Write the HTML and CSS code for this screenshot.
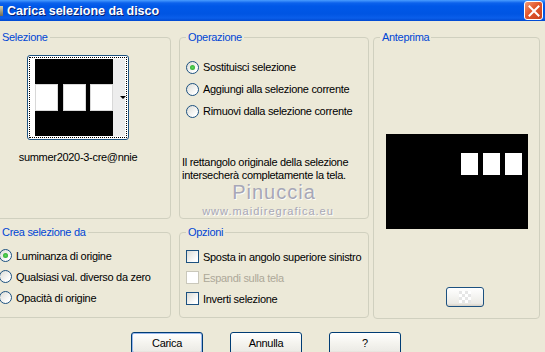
FILE: index.html
```html
<!DOCTYPE html>
<html lang="it">
<head>
  <meta charset="UTF-8">
  <title>Carica selezione da disco</title>
  <link rel="stylesheet" href="styles.css">
</head>
<body>
  <div class="titlebar">
    <span class="app-icon"></span>
    <span class="title">Carica selezione da disco</span>
    <span class="close">
      <svg width="12" height="12" viewBox="0 0 12 12"><path d="M1.5 1.5 L10.5 10.5 M10.5 1.5 L1.5 10.5" stroke="#fff" stroke-width="2" stroke-linecap="square"/></svg>
    </span>
  </div>

  <div class="main">
    <div class="groups">
      <div class="group sel">
        <div class="legend">Selezione</div>
        <div class="thumb">
          <div class="thumb-inner">
            <div class="thumb-img">
              <div class="thumb-row">
                <span class="tsq"></span><span class="tsq"></span><span class="tsq"></span>
              </div>
            </div>
            <div class="thumb-strip"><span class="arrow"></span></div>
          </div>
        </div>
        <div class="caption">summer2020-3-cre@nnie</div>
      </div>

      <div class="group op">
        <div class="legend">Operazione</div>
        <label class="opt"><span class="radio on"></span>Sostituisci selezione</label>
        <label class="opt"><span class="radio"></span>Aggiungi alla selezione corrente</label>
        <label class="opt"><span class="radio"></span>Rimuovi dalla selezione corrente</label>
        <p class="info">Il rettangolo originale della selezione<br>intersecherà completamente la tela.</p>
        <div class="mark">
          <div class="mark-name">Pinuccia</div>
          <div class="mark-url">www.maidiregrafica.eu</div>
        </div>
      </div>

      <div class="group crea">
        <div class="legend">Crea selezione da</div>
        <label class="opt"><span class="radio on"></span>Luminanza di origine</label>
        <label class="opt"><span class="radio"></span>Qualsiasi val. diverso da zero</label>
        <label class="opt"><span class="radio"></span>Opacità di origine</label>
      </div>

      <div class="group opz">
        <div class="legend">Opzioni</div>
        <label class="opt"><span class="check"></span>Sposta in angolo superiore sinistro</label>
        <label class="opt disabled"><span class="check"></span>Espandi sulla tela</label>
        <label class="opt"><span class="check"></span>Inverti selezione</label>
      </div>
    </div>

    <div class="group preview">
      <div class="legend">Anteprima</div>
      <div class="canvas">
        <span class="psq"></span><span class="psq"></span><span class="psq"></span>
      </div>
      <button class="mini"><span class="checker"></span></button>
    </div>
  </div>

  <div class="buttons">
    <button class="btn default">Carica</button>
    <button class="btn">Annulla</button>
    <button class="btn">?</button>
  </div>
</body>
</html>
```

FILE: styles.css
```css
body {
  margin: 0;
  width: 545px;
  height: 352px;
  overflow: hidden;
  background: #ece9d8;
  font-family: "Liberation Sans", Arial, sans-serif;
  font-size: 11px;
  letter-spacing: -0.3px;
  color: #000;
}

/* title bar */
.titlebar {
  height: 21px;
  display: flex;
  align-items: center;
  background: linear-gradient(#4a9dff 0, #0c62ec 3px, #0058e8 6px, #0055e3 14px, #0a5eea 18px, #0048d0 21px);
}
.app-icon {
  width: 4px;
  height: 10px;
  margin-left: -1px;
  background: linear-gradient(#d9d0a8, #6f6a55);
}
.title {
  margin-left: 4px;
  color: #fff;
  font-family: "Liberation Sans", Arial, sans-serif;
  font-weight: bold;
  font-size: 12.5px;
  letter-spacing: 0;
  text-shadow: 1px 1px 0 #0a1e6e;
}
.close {
  margin-left: auto;
  margin-right: 2px;
  width: 17px;
  height: 17px;
  border: 1px solid #fff;
  border-radius: 3px;
  background: linear-gradient(135deg, #f29a75, #e2562b 45%, #c8401c);
  display: flex;
  align-items: center;
  justify-content: center;
}

/* layout */
.main {
  display: flex;
  margin-left: -7px;
  margin-top: 16px;
}
.groups {
  display: grid;
  grid-template-columns: 178px 190px;
  grid-template-rows: 182px 86px;
  column-gap: 8px;
  row-gap: 13px;
}
.group {
  position: relative;
  box-sizing: border-box;
  border: 1px solid #d0d0bf;
  border-radius: 4px;
}
.legend {
  position: absolute;
  top: -7px;
  left: 6px;
  padding: 0 2px;
  background: #ece9d8;
  color: #0046d5;
  line-height: 13px;
}

/* selezione */
.sel {
  padding: 17px 0 0 33px;
}
.thumb {
  box-sizing: border-box;
  width: 102px;
  height: 85px;
  border: 1px solid #1c5180;
  border-radius: 3px;
  background: #fff;
  padding: 1px;
}
.thumb-inner {
  height: 100%;
  box-sizing: border-box;
  border: 1px dotted #000;
  display: flex;
  padding: 1px 1px 1px 5px;
}
.thumb-img {
  width: 78px;
  background: #000;
  display: flex;
  align-items: center;
}
.thumb-row {
  width: 100%;
  display: flex;
  justify-content: space-between;
  background: #000;
}
.tsq {
  width: 23px;
  height: 27px;
  background: #fff;
  box-shadow: inset 0 0 0 1px #d8d8d8;
}
.thumb-strip {
  flex: 1;
  background: #ededed;
  position: relative;
}
.arrow {
  position: absolute;
  right: -1px;
  top: 37px;
  border-left: 3px solid transparent;
  border-right: 3px solid transparent;
  border-top: 3px solid #000;
}
.caption {
  width: 102px;
  margin-top: 11px;
  display: flex;
  justify-content: center;
  white-space: nowrap;
}

/* options */
.opt {
  display: flex;
  align-items: center;
  height: 22px;
  white-space: nowrap;
}
.radio, .check {
  box-sizing: border-box;
  width: 13px;
  height: 13px;
  margin-right: 4px;
  border: 1px solid #1c5180;
  background: linear-gradient(135deg, #dcdcd6, #fff 80%);
  position: relative;
  flex: none;
}
.radio {
  border-radius: 50%;
}
.radio.on::after {
  content: "";
  position: absolute;
  left: 3px;
  top: 3px;
  width: 5px;
  height: 5px;
  border-radius: 50%;
  background: radial-gradient(#5ed85e, #21a121);
}
.disabled {
  color: #aca899;
}
.disabled .check {
  border-color: #cac8bb;
  background: #fff;
}

.op {
  padding: 18px 0 0 6px;
}
.info {
  margin: 34px 0 0 -4px;
  line-height: 13px;
}
.mark {
  text-align: center;
  margin-left: -6px;
  color: #a7a7b7;
  text-shadow: 1px 1px 0 #fdfdf8;
}
.mark-name {
  font-size: 20px;
  line-height: 20px;
  letter-spacing: 1px;
}
.mark-url {
  font-size: 11px;
  letter-spacing: 1px;
  margin-top: 3px;
  margin-left: -12px;
}

.crea {
  padding: 12px 0 0 5px;
}
.opz {
  padding: 13px 0 0 6px;
}
.opz .opt,
.crea .opt {
  height: 21px;
}

/* anteprima */
.preview {
  margin-left: 4px;
  width: 167px;
  height: 282px;
  padding: 96px 0 0 12px;
}
.canvas {
  width: 142px;
  height: 95px;
  background: #000;
  display: flex;
  gap: 5px;
  justify-content: flex-end;
  padding: 19px 6px 0 0;
  box-sizing: border-box;
}
.psq {
  width: 17px;
  height: 22px;
  background: #fff;
}
.mini {
  display: block;
  margin: 58px 0 0 60px;
  width: 38px;
  height: 20px;
  border: 1px solid #1c5180;
  border-radius: 3px;
  background: linear-gradient(#fff, #ecebe6 85%, #d6d0c5);
  padding: 0;
}
.checker {
  display: block;
  margin: 0 auto;
  width: 12px;
  height: 12px;
  background: conic-gradient(#fff 25%, #e6e6e6 0 50%, #fff 0 75%, #e6e6e6 0) 0 0 / 6px 6px;
}

/* buttons */
.buttons {
  display: flex;
  gap: 27px;
  margin: 13px 0 0 131px;
}
.btn {
  width: 72px;
  height: 23px;
  box-sizing: border-box;
  border: 1px solid #003c74;
  border-radius: 3px;
  background: linear-gradient(#fff, #f4f3ee 50%, #ecebe6 85%, #d6d0c5);
  font-family: "Liberation Sans", Arial, sans-serif;
  font-size: 11px;
  letter-spacing: -0.3px;
  color: #000;
  padding: 0 0 2px;
}
.btn.default {
  box-shadow: inset 0 0 0 1px #9ab8ec, inset 0 -1px 0 1px #4d7ed6;
}
```
